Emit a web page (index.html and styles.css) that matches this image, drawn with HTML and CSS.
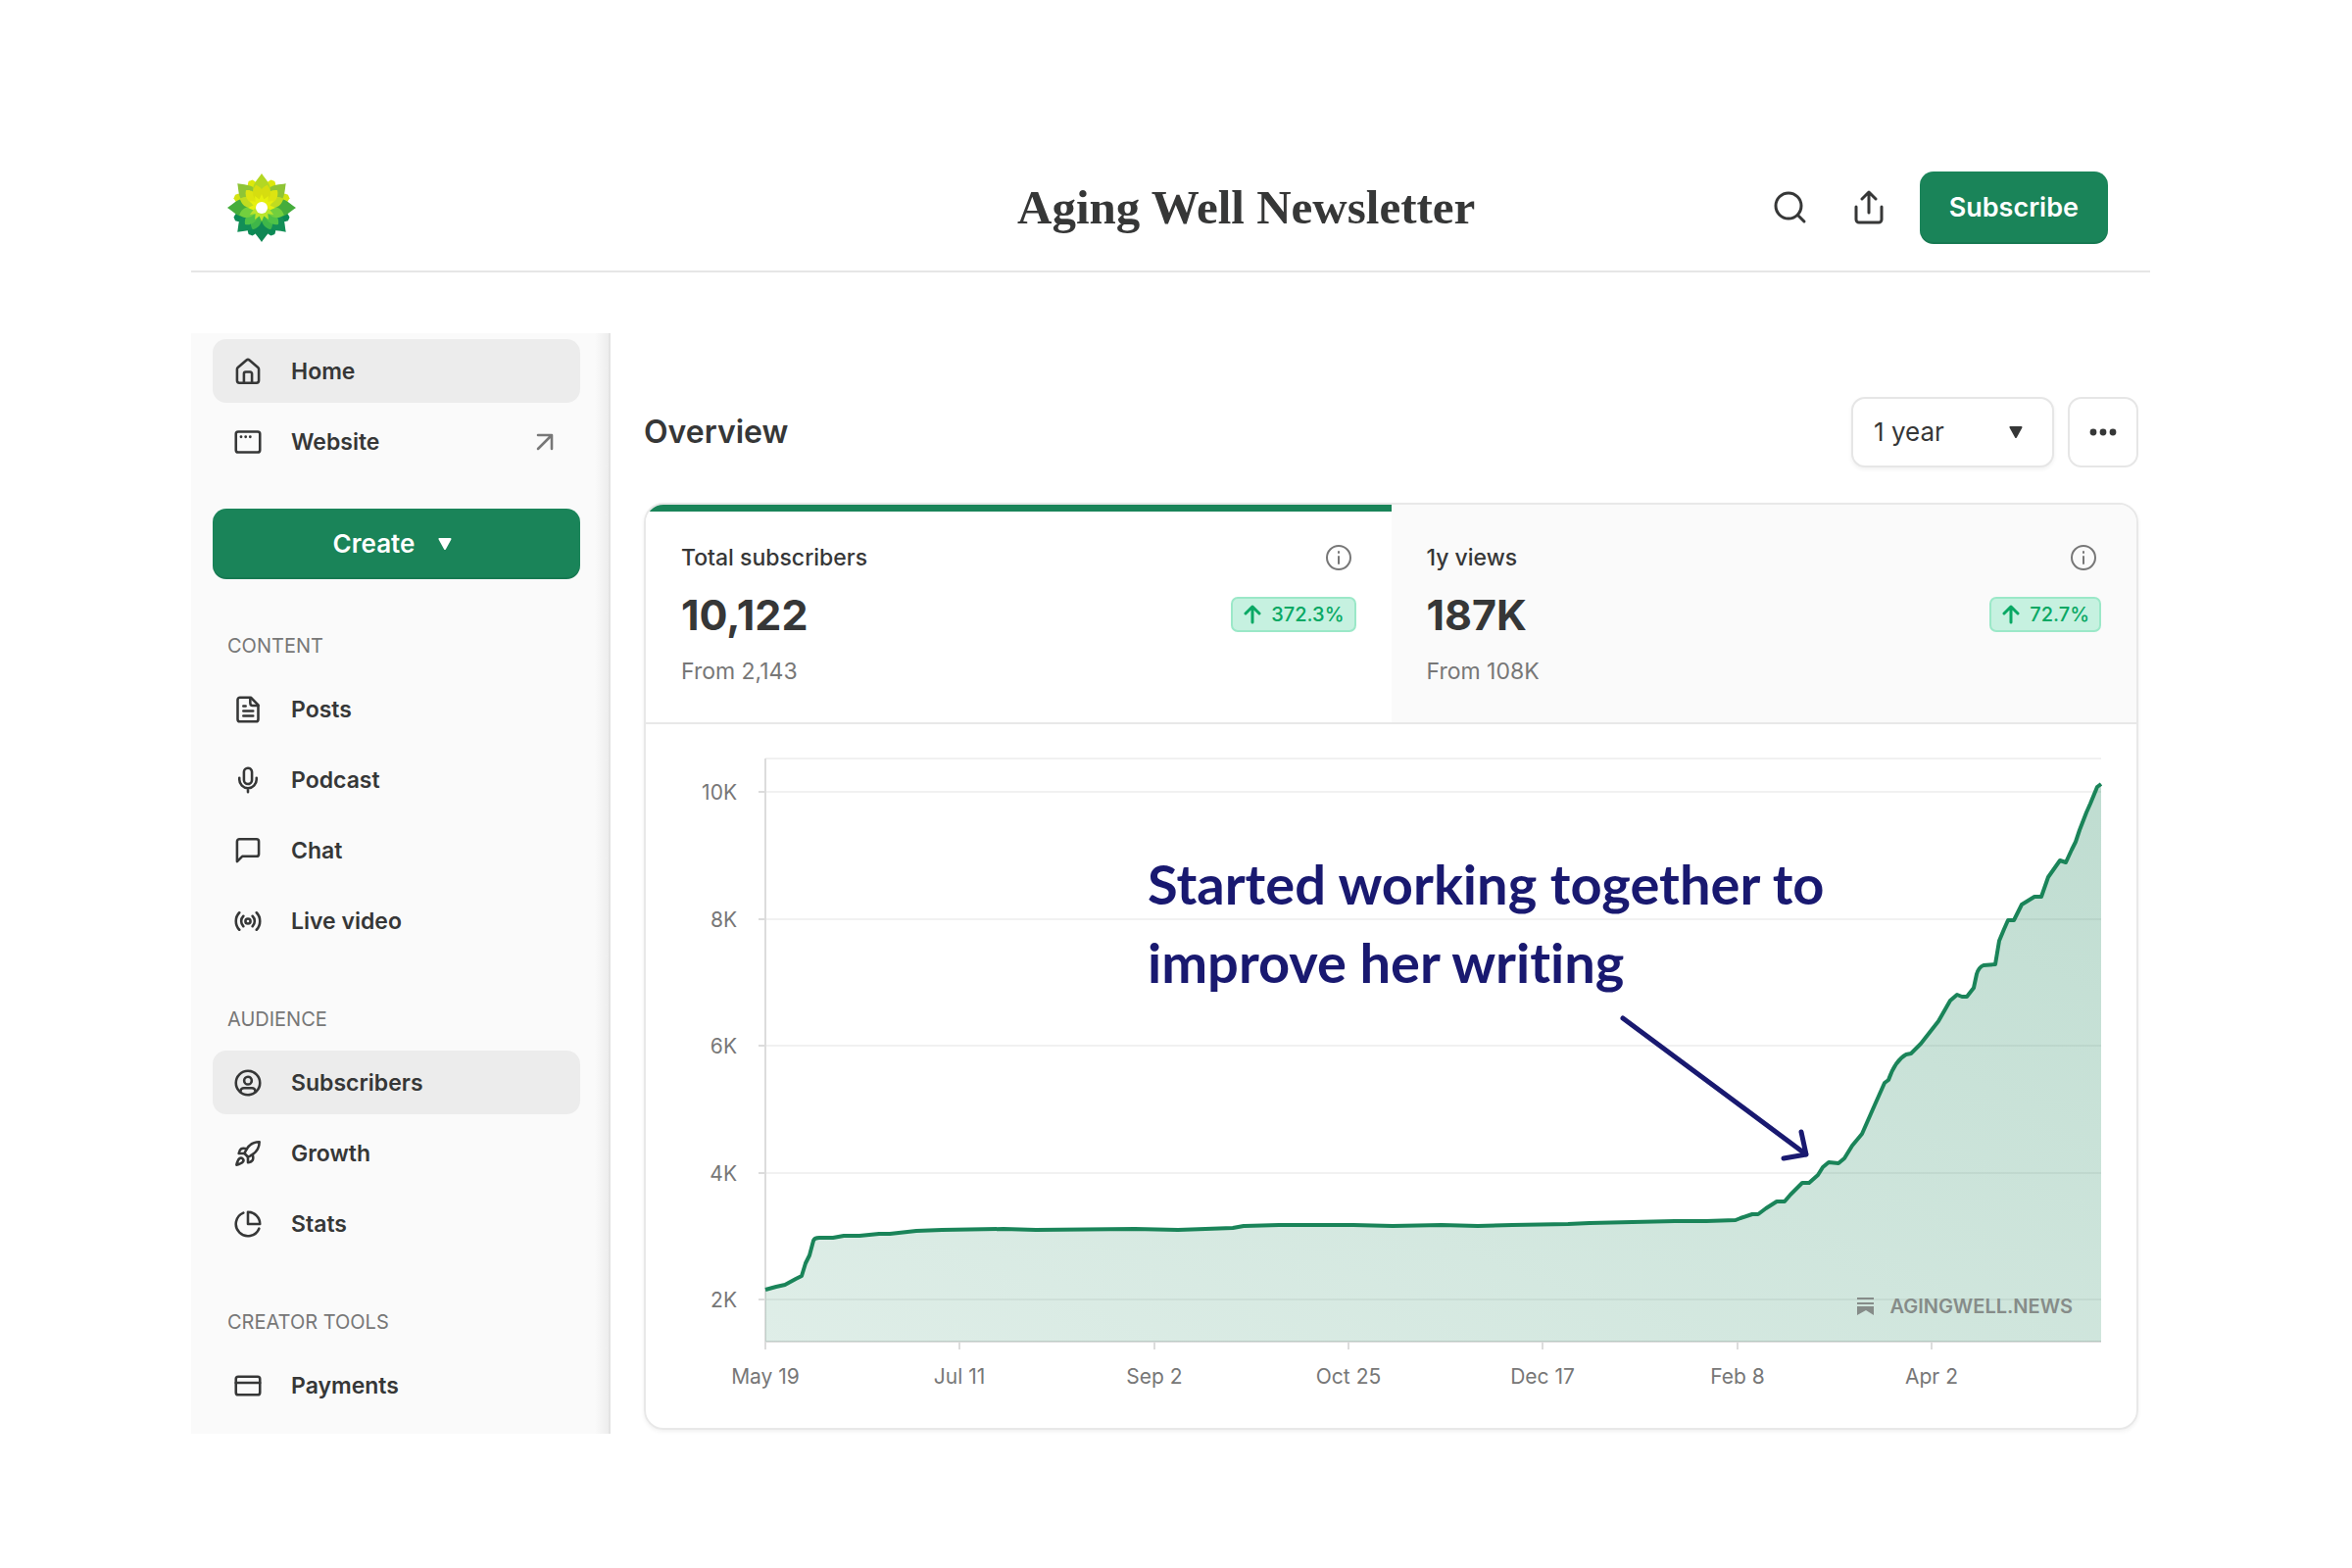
FILE: index.html
```html
<!DOCTYPE html>
<html lang="en">
<head>
  <meta charset="UTF-8" />
  <meta name="viewport" content="width=device-width, initial-scale=1" />
  <title>Aging Well Newsletter</title>
  <link rel="stylesheet" href="styles.css">
</head>
<body>
  <div class="page">
    <header class="topbar">
      <a class="logo" href="#" aria-label="Aging Well home">
        <svg viewBox="-36 -36 72 72">
          <defs>
            <path id="petal-l" d="M0-35C4-29 9-25 9-18C9-12 5-6 0 0C-5-6-9-12-9-18C-9-25-4-29 0-35Z" />
            <path id="petal-m" d="M-2-30L2-30C6-26 7-20 6-14L0 0L-6-14C-7-20-6-26-2-30Z" />
            <path id="petal-s" d="M0-24C4-21 6-17 5-12L0 0L-5-12C-6-17-4-21 0-24Z" />
            <path id="petal-xs" d="M0-14L3-7L0 0L-3-7Z" />
          </defs>
          <use href="#petal-m" fill="#0b8a55" transform="rotate(112.5)" />
          <use href="#petal-m" fill="#0b8a55" transform="rotate(157.5)" />
          <use href="#petal-m" fill="#0b8a55" transform="rotate(202.5)" />
          <use href="#petal-m" fill="#0b8a55" transform="rotate(247.5)" />
          <use href="#petal-l" fill="#138f57" transform="rotate(135)" />
          <use href="#petal-l" fill="#138f57" transform="rotate(225)" />
          <use href="#petal-l" fill="#0f8754" transform="rotate(180)" />
          <use href="#petal-m" fill="#d3e313" transform="rotate(67.5)" />
          <use href="#petal-m" fill="#d3e313" transform="rotate(292.5)" />
          <use href="#petal-l" fill="#45ad3c" transform="rotate(90)" />
          <use href="#petal-l" fill="#45ad3c" transform="rotate(270)" />
          <use href="#petal-m" fill="#dbe80c" transform="rotate(22.5)" />
          <use href="#petal-m" fill="#dbe80c" transform="rotate(337.5)" />
          <use href="#petal-l" fill="#8ec436" transform="rotate(45)" />
          <use href="#petal-l" fill="#8ec436" transform="rotate(315)" />
          <use href="#petal-l" fill="#b3d723" />
          <use href="#petal-s" fill="#3fb649" transform="rotate(157.5)" />
          <use href="#petal-s" fill="#3fb649" transform="rotate(202.5)" />
          <use href="#petal-s" fill="#4fc247" transform="rotate(135)" />
          <use href="#petal-s" fill="#4fc247" transform="rotate(225)" />
          <use href="#petal-s" fill="#72cf3e" transform="rotate(108)" />
          <use href="#petal-s" fill="#72cf3e" transform="rotate(252)" />
          <use href="#petal-s" fill="#c0dc20" transform="rotate(67.5)" />
          <use href="#petal-s" fill="#c0dc20" transform="rotate(292.5)" />
          <use href="#petal-s" fill="#dde411" transform="rotate(42)" />
          <use href="#petal-s" fill="#dde411" transform="rotate(318)" />
          <use href="#petal-s" fill="#d6dd10" transform="rotate(14)" />
          <use href="#petal-s" fill="#d6dd10" transform="rotate(346)" />
          <g fill="#e6f00f">
            <use href="#petal-xs" />
            <use href="#petal-xs" transform="rotate(30)" />
            <use href="#petal-xs" transform="rotate(60)" />
            <use href="#petal-xs" transform="rotate(90)" />
            <use href="#petal-xs" transform="rotate(270)" />
            <use href="#petal-xs" transform="rotate(300)" />
            <use href="#petal-xs" transform="rotate(330)" />
          </g>
          <g fill="#b9e52c">
            <use href="#petal-xs" transform="rotate(120)" />
            <use href="#petal-xs" transform="rotate(150)" />
            <use href="#petal-xs" transform="rotate(180)" />
            <use href="#petal-xs" transform="rotate(210)" />
            <use href="#petal-xs" transform="rotate(240)" />
          </g>
          <circle r="6" fill="#fff" />
        </svg>
      </a>
      <h1>Aging Well Newsletter</h1>
      <div class="actions">
        <button type="button" class="icon-btn" aria-label="Search">
          <svg class="icon-lg" viewBox="0 0 36 36"><circle cx="16" cy="16" r="13" /><path d="M25.5 25.5L32 32" /></svg>
        </button>
        <button type="button" class="icon-btn" aria-label="Share">
          <svg class="icon-lg" viewBox="0 0 36 36"><path d="M18 23V2M11 9l7-7 7 7M5 17v13a3 3 0 0 0 3 3h20a3 3 0 0 0 3-3V17" /></svg>
        </button>
        <button type="button" class="btn btn-subscribe">Subscribe</button>
      </div>
    </header>

    <div class="layout">
      <nav class="sidebar" aria-label="Dashboard">
        <ul>
          <li><a class="nav-link active" href="#">
            <svg class="icon" viewBox="0 0 24 24"><path d="M2.5 10a2 2 0 0 1 .7-1.5l7.500-6.300a2 2 0 0 1 2.600 0l7.500 6.300a2 2 0 0 1 .7 1.500v10a2 2 0 0 1-2 2h-15a2 2 0 0 1-2-2z" /><path d="M8.500 22v-8a1.500 1.500 0 0 1 1.500-1.500h4a1.500 1.500 0 0 1 1.500 1.500v8" /></svg>
            Home</a></li>
          <li><a class="nav-link" href="#">
            <svg class="icon" viewBox="0 0 24 24"><rect x="1.500" y="3" width="21" height="18" rx="2" /><g fill="currentColor" stroke="none"><circle cx="6" cy="7.500" r="1.200" /><circle cx="10" cy="7.500" r="1.200" /><circle cx="14" cy="7.500" r="1.200" /></g></svg>
            Website
            <svg class="icon icon-ext" viewBox="0 0 24 24"><path d="M6 6h12v12M18 6L6 18" /></svg></a></li>
        </ul>

        <button type="button" class="btn btn-create">Create
          <svg class="caret" viewBox="0 0 14 12"><path d="M1.500 1h11L7 11z" /></svg>
        </button>

        <h2 class="nav-title">CONTENT</h2>
        <ul>
          <li><a class="nav-link" href="#">
            <svg class="icon" viewBox="0 0 24 24"><path d="M14.500 1.500H5a2 2 0 0 0-2 2v17a2 2 0 0 0 2 2h14a2 2 0 0 0 2-2V8z" /><path d="M14 2v4.500a2 2 0 0 0 2 2h5M8 9h2M8 13.300h8.500M8 17.500h8.500" /></svg>
            Posts</a></li>
          <li><a class="nav-link" href="#">
            <svg class="icon" viewBox="0 0 24 24"><rect x="8.500" y="1.500" width="7" height="14" rx="3.500" /><path d="M19.500 10v1.500a7.500 7.500 0 0 1-15 0V10M12 19v3.500" /></svg>
            Podcast</a></li>
          <li><a class="nav-link" href="#">
            <svg class="icon" viewBox="0 0 24 24"><path d="M21.500 15a2 2 0 0 1-2 2H7l-4.500 4.500V4a2 2 0 0 1 2-2h15a2 2 0 0 1 2 2z" /></svg>
            Chat</a></li>
          <li><a class="nav-link" href="#">
            <svg class="icon" viewBox="0 0 24 24"><circle cx="12" cy="12" r="2.200" /><path d="M4.500 19.500C.5 15.500.5 8.500 4.500 4.500M8 16.500c-2.500-2.500-2.500-6.500 0-9M16 7.500c2.500 2.500 2.500 6.500 0 9M19.500 4.500c4 4 4 11 0 15" /></svg>
            Live video</a></li>
        </ul>

        <h2 class="nav-title">AUDIENCE</h2>
        <ul>
          <li><a class="nav-link active" href="#">
            <svg class="icon" viewBox="0 0 24 24"><circle cx="12" cy="12" r="10.500" /><circle cx="12" cy="10" r="3.300" /><path d="M5.500 20v-.5a3 3 0 0 1 3-3h7a3 3 0 0 1 3 3v.5" /></svg>
            Subscribers</a></li>
          <li><a class="nav-link" href="#">
            <svg class="icon" viewBox="0 0 24 24"><path d="M4.500 16.500c-1.500 1.260-2.500 5.500-2.500 5.500s4.240-1 5.500-2.500c.71-.84.7-2.130-.09-2.910a2.180 2.180 0 0 0-2.910-.09z" /><path d="M12 15l-3-3a22 22 0 0 1 2-3.950A12.880 12.880 0 0 1 22 2c0 2.720-.78 7.500-6 11a22.350 22.350 0 0 1-4 2z" /><path d="M9 12H4s.55-3.030 2-4c1.620-1.080 5 0 5 0M12 15v5s3.030-.55 4-2c1.080-1.620 0-5 0-5" /></svg>
            Growth</a></li>
          <li><a class="nav-link" href="#">
            <svg class="icon" viewBox="0 0 24 24"><path d="M22.500 12A10.500 10.500 0 0 0 12 1.500V12z" /><path d="M21.700 16A10.500 10.500 0 1 1 8 2.300" /></svg>
            Stats</a></li>
        </ul>

        <h2 class="nav-title">CREATOR TOOLS</h2>
        <ul>
          <li><a class="nav-link" href="#">
            <svg class="icon" viewBox="0 0 24 24"><rect x="1.500" y="4" width="21" height="16" rx="2" /><path d="M1.500 9.500h21" /></svg>
            Payments</a></li>
        </ul>
      </nav>

      <main class="main">
        <div class="toolbar">
          <h2>Overview</h2>
          <div class="select-wrap">
            <select aria-label="Time range">
              <option>1 year</option>
              <option>90 days</option>
              <option>30 days</option>
            </select>
            <svg class="caret" viewBox="0 0 14 12"><path d="M1.500 1h11L7 11z" /></svg>
          </div>
          <button type="button" class="btn-more" aria-label="More options">
            <svg viewBox="0 0 28 10"><circle cx="4" cy="5" r="3.400" /><circle cx="14" cy="5" r="3.400" /><circle cx="24" cy="5" r="3.400" /></svg>
          </button>
        </div>

        <section class="card">
          <div class="stats">
            <div class="stat selected">
              <div class="stat-row">
                <span class="stat-label">Total subscribers</span>
                <button type="button" class="btn-info" aria-label="About total subscribers">
                  <svg viewBox="0 0 28 28"><circle cx="14" cy="14" r="12" /><path d="M14 13v7M14 8v1" /></svg>
                </button>
              </div>
              <div class="stat-row stat-main">
                <strong>10,122</strong>
                <span class="badge"><svg viewBox="0 0 20 20"><path d="M10 18V2M3 9l7-7 7 7" /></svg>372.3%</span>
              </div>
              <p>From 2,143</p>
            </div>
            <div class="stat">
              <div class="stat-row">
                <span class="stat-label">1y views</span>
                <button type="button" class="btn-info" aria-label="About views">
                  <svg viewBox="0 0 28 28"><circle cx="14" cy="14" r="12" /><path d="M14 13v7M14 8v1" /></svg>
                </button>
              </div>
              <div class="stat-row stat-main">
                <strong>187K</strong>
                <span class="badge"><svg viewBox="0 0 20 20"><path d="M10 18V2M3 9l7-7 7 7" /></svg>72.7%</span>
              </div>
              <p>From 108K</p>
            </div>
          </div>

          <!-- plot area starts at 0,0 and is 1363 x 595 -->
          <svg class="chart" viewBox="-122 -35 1521 718" role="img" aria-label="Total subscribers over one year">
            <defs>
              <linearGradient id="area" x1="0" y1="1" x2="1" y2="0">
                <stop offset="0" stop-color="#1a8459" stop-opacity="0.14" />
                <stop offset="1" stop-color="#1a8459" stop-opacity="0.28" />
              </linearGradient>
            </defs>

            <path class="grid" d="M0 0H1363M0 34H1363M0 164H1363M0 293H1363M0 423H1363M0 552H1363" />
            <path class="axis" d="M0 0V603M-7 34H0M-7 164H0M-7 293H0M-7 423H0M-7 552H0M0 595H1363M198 595v8M397 595v8M595 595v8M793 595v8M992 595v8M1190 595v8" />

            <path fill="url(#area)" d="M0 595L0 542L11 539L20 537L31 531L37 528L41 515L45 507L49 492L55 489L69 489L80 487L96 487L116 485L127 485L154 482L180 481L243 480L276 481L377 480L421 481L477 479L488 477L524 476L566 476L600 476L640 477L690 476L727 477L762 476L819 475L841 474L928 472L960 472L990 471L995 469L1007 465L1013 465L1021 459L1032 452L1040 452L1046 445L1058 433L1065 433L1074 425L1079 417L1085 412L1095 413L1101 408L1109 395L1119 383L1130 358L1142 331L1146 328Q1153 308 1164 302L1169 301L1179 291L1197 268L1209 247L1216 241L1221 243L1226 243L1233 234L1236 220Q1238 213 1243 211L1255 210L1259 186L1264 174L1268 165L1274 165L1282 149L1295 141L1302 141L1309 121L1321 104L1327 106L1333 93L1337 85L1341 73L1348 55L1352 46L1359 29L1363 26L1363 595Z" />
            <path class="line" d="M0 542L11 539L20 537L31 531L37 528L41 515L45 507L49 492Q50 489 55 489L69 489L80 487L96 487L116 485L127 485L154 482L180 481L243 480L276 481L377 480L421 481L477 479L488 477L524 476L566 476L600 476L640 477L690 476L727 477L762 476L819 475L841 474L928 472L960 472L990 471L995 469L1007 465L1013 465L1021 459L1032 452L1040 452L1046 445L1058 433L1065 433L1074 425L1079 417L1085 412L1095 413L1101 408L1109 395L1119 383L1130 358L1142 331L1146 328Q1153 308 1164 302L1169 301L1179 291L1197 268L1209 247L1216 241L1221 243L1226 243L1233 234L1236 220Q1238 213 1243 211L1255 210L1259 186L1264 174L1268 165L1274 165L1282 149L1295 141L1302 141L1309 121L1321 104L1327 106L1333 93L1337 85L1341 73L1348 55L1352 46L1359 29L1363 26" />

            <g class="labels" text-anchor="end">
              <text x="-29" y="42">10K</text>
              <text x="-29" y="172">8K</text>
              <text x="-29" y="301">6K</text>
              <text x="-29" y="431">4K</text>
              <text x="-29" y="560">2K</text>
            </g>
            <g class="labels" text-anchor="middle">
              <text x="0" y="638">May 19</text>
              <text x="198" y="638">Jul 11</text>
              <text x="397" y="638">Sep 2</text>
              <text x="595" y="638">Oct 25</text>
              <text x="793" y="638">Dec 17</text>
              <text x="992" y="638">Feb 8</text>
              <text x="1190" y="638">Apr 2</text>
            </g>

            <path class="mark" d="M1114 550h17v2h-17zM1114 555h17v2h-17zM1114 559h17v9l-8-5-9 5z" />
            <text class="watermark" x="1334" y="566" text-anchor="end">AGINGWELL.NEWS</text>

            <g class="note">
              <text x="390" y="149">Started working together to</text>
              <text x="390" y="229">improve her writing</text>
              <path d="M875 265L1062 404M1057 381L1062 404L1039 408" />
            </g>
          </svg>
        </section>
      </main>
    </div>
  </div>
</body>
</html>
```

FILE: styles.css
```css
* {
  box-sizing: border-box;
}
body {
  margin: 0;
  background: #fff;
  color: #363737;
  font-family: Inter, "Liberation Sans", sans-serif;
  font-size: 23px;
  line-height: 32px;
}
.page {
  padding: 147px 206px 96px 195px;
}
h1, h2, p, ul {
  margin: 0;
  padding: 0;
}
ul {
  list-style: none;
}
a {
  color: inherit;
  text-decoration: none;
}
button, select {
  font: inherit;
  color: inherit;
  cursor: pointer;
}
svg {
  display: block;
  flex: none;
}

/* header */
.topbar {
  display: grid;
  grid-template-columns: 5fr auto 4fr;
  align-items: center;
  min-height: 131px;
  padding: 0 43px 0 36px;
  border-bottom: 2px solid #e6e6e6;
}
.logo {
  width: 72px;
}
.topbar h1 {
  font-family: "Liberation Serif", serif;
  font-size: 49px;
  line-height: 56px;
  font-weight: 700;
}
.actions {
  display: flex;
  align-items: center;
  justify-content: flex-end;
}
.icon-btn {
  display: grid;
  place-items: center;
  width: 80px;
  height: 72px;
  padding: 0;
  border: 0;
  background: none;
}
.icon-lg {
  width: 36px;
  height: 36px;
  fill: none;
  stroke: #363737;
  stroke-width: 3;
  stroke-linecap: round;
  stroke-linejoin: round;
}
.btn {
  border: 0;
  border-radius: 14px;
  background: #1a8459;
  color: #fff;
  font-weight: 600;
  box-shadow: inset 0 -2px 0 rgba(0, 0, 0, 0.08);
}
.btn-subscribe {
  height: 74px;
  margin-left: 12px;
  padding: 0 30px;
  font-size: 27px;
}

/* sidebar */
.layout {
  display: flex;
  margin-top: 62px;
}
.sidebar {
  width: 428px;
  padding: 6px 29px 17px 22px;
  border-right: 2px solid #e3e3e3;
  background: linear-gradient(to left, #ededed, #fafafa 14px);
}
.sidebar ul {
  display: flex;
  flex-direction: column;
  gap: 7px;
}
.nav-link {
  display: flex;
  align-items: center;
  gap: 30px;
  height: 65px;
  padding: 0 22px;
  border-radius: 14px;
  font-weight: 600;
}
.nav-link.active {
  background: #ececec;
}
.icon {
  width: 28px;
  height: 28px;
  fill: none;
  stroke: currentColor;
  stroke-width: 2.2;
  stroke-linecap: round;
  stroke-linejoin: round;
}
.icon-ext {
  margin-left: auto;
  color: #777;
}
.btn-create {
  display: flex;
  align-items: center;
  justify-content: center;
  gap: 24px;
  width: 100%;
  height: 72px;
  margin-top: 36px;
  padding: 0 8px 0 0;
  font-size: 26px;
}
.caret {
  width: 14px;
  height: 12px;
  fill: currentColor;
  stroke: currentColor;
  stroke-width: 2;
  stroke-linejoin: round;
}
.nav-title {
  padding: 56px 15px 20px;
  color: #777;
  font-size: 20px;
  line-height: 24px;
  font-weight: 400;
}

/* main */
.main {
  flex: 1;
  min-width: 0;
  padding: 65px 12px 0 34px;
}
.toolbar {
  display: flex;
  align-items: center;
  gap: 14px;
  margin-bottom: 36px;
}
.toolbar h2 {
  flex: 1;
  font-size: 32px;
  line-height: 40px;
  font-weight: 600;
}
.select-wrap {
  position: relative;
}
.select-wrap select {
  appearance: none;
  width: 207px;
  height: 72px;
  padding: 0 21px;
  border: 2px solid #e6e6e6;
  border-radius: 14px;
  background: #fff;
  font-size: 26px;
  box-shadow: 0 2px 4px rgba(0, 0, 0, 0.06);
}
.select-wrap .caret {
  position: absolute;
  top: 30px;
  right: 32px;
  pointer-events: none;
}
.btn-more {
  display: grid;
  place-items: center;
  width: 72px;
  height: 72px;
  padding: 0;
  border: 2px solid #e6e6e6;
  border-radius: 14px;
  background: #fff;
}
.btn-more svg {
  width: 28px;
  fill: #363737;
}
.card {
  border: 2px solid #e8e8e8;
  border-radius: 20px;
  overflow: hidden;
  box-shadow: 0 2px 4px rgba(0, 0, 0, 0.06);
}
.stats {
  display: grid;
  grid-template-columns: 1fr 1fr;
  border-bottom: 2px solid #e8e8e8;
}
.stat {
  display: flex;
  flex-direction: column;
  gap: 18px;
  padding: 38px 36px 36px;
  background: #fafafa;
}
.stat.selected {
  background: #fff;
  box-shadow: inset 0 7px 0 #1a8459;
}
.stat-row {
  display: flex;
  align-items: center;
  justify-content: space-between;
}
.stat-label {
  font-weight: 500;
}
.stat-main {
  height: 48px;
}
.stat-main strong {
  font-size: 43px;
  line-height: 48px;
  font-weight: 700;
}
.stat p {
  color: #777;
}
.btn-info {
  padding: 0 4px;
  border: 0;
  background: none;
}
.btn-info svg {
  width: 28px;
  fill: none;
  stroke: #777;
  stroke-width: 2;
  stroke-linecap: round;
}
.badge {
  display: flex;
  align-items: center;
  gap: 9px;
  height: 36px;
  padding: 0 10px;
  border: 2px solid #9be8c8;
  border-radius: 7px;
  background: #c6f1e0;
  color: #09a864;
  font-size: 20px;
  font-weight: 500;
}
.badge svg {
  width: 20px;
  fill: none;
  stroke: currentColor;
  stroke-width: 3;
  stroke-linecap: round;
  stroke-linejoin: round;
}

/* chart */
.chart {
  width: 100%;
}
.grid {
  stroke: #f1f1f1;
  stroke-width: 2;
}
.axis {
  fill: none;
  stroke: #dcdcdc;
  stroke-width: 2;
}
.line {
  fill: none;
  stroke: #1a8459;
  stroke-width: 4;
  stroke-linejoin: round;
}
.labels {
  fill: #777;
  font-size: 21px;
}
.mark, .watermark {
  fill: #868c89;
}
.watermark {
  font-size: 20px;
  font-weight: 600;
}
.note text {
  fill: #191970;
  font-family: Lato, sans-serif;
  font-size: 56px;
  font-weight: 700;
  font-variant-ligatures: none;
}
.note path {
  fill: none;
  stroke: #191970;
  stroke-width: 5;
  stroke-linecap: round;
  stroke-linejoin: round;
}
```
